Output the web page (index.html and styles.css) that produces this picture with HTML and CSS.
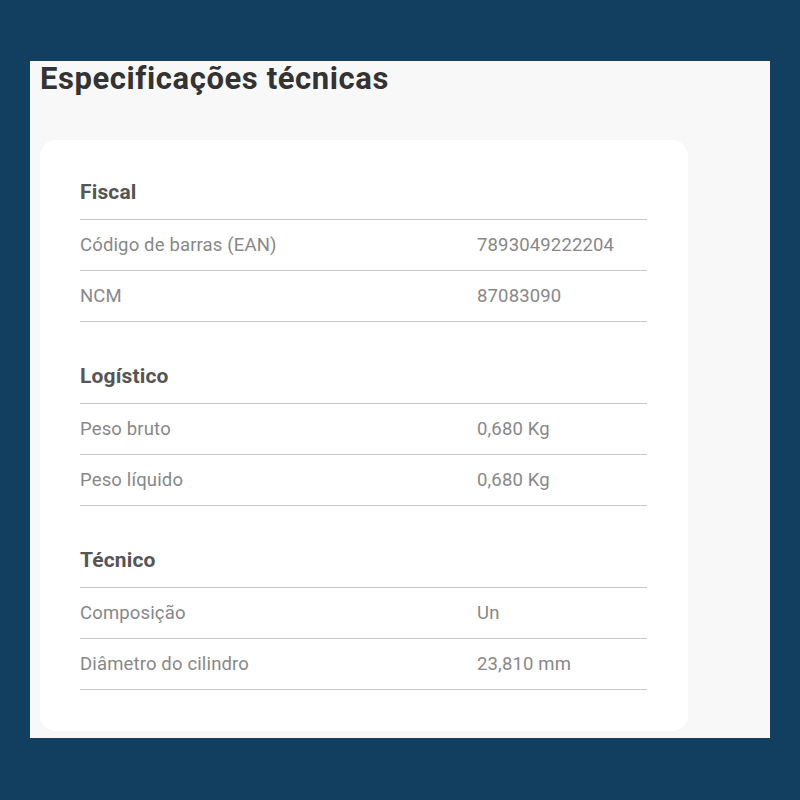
FILE: index.html
```html
<!DOCTYPE html>
<html lang="pt-BR">
<head>
<meta charset="utf-8">
<title>Especificações técnicas</title>
<link rel="stylesheet" href="styles.css">
</head>
<body>
<div class="panel">
  <h1 class="title">Especificações técnicas</h1>
  <div class="card">
    <section class="group">
      <h2 class="group-title">Fiscal</h2>
      <div class="row"><span class="label">Código de barras (EAN)</span><span class="value">7893049222204</span></div>
      <div class="row"><span class="label">NCM</span><span class="value">87083090</span></div>
    </section>
    <section class="group">
      <h2 class="group-title">Logístico</h2>
      <div class="row"><span class="label">Peso bruto</span><span class="value">0,680 Kg</span></div>
      <div class="row"><span class="label">Peso líquido</span><span class="value">0,680 Kg</span></div>
    </section>
    <section class="group">
      <h2 class="group-title">Técnico</h2>
      <div class="row"><span class="label">Composição</span><span class="value">Un</span></div>
      <div class="row"><span class="label">Diâmetro do cilindro</span><span class="value">23,810 mm</span></div>
    </section>
  </div>
</div>
</body>
</html>
```

FILE: styles.css
```css
html, body {
  margin: 0;
  padding: 0;
  background: #123f60;
  height: 100%;
}
body {
  font-family: Roboto, "Liberation Sans", sans-serif;
  padding-top: 61px;
  box-sizing: border-box;
}
.panel {
  margin-left: 30px;
  width: 740px;
  height: 677px;
  background: #f8f8f8;
  padding-left: 10px;
  box-sizing: border-box;
  overflow: hidden;
}
.title {
  margin: 0;
  font-size: 31px;
  line-height: 36px;
  letter-spacing: 0.58px;
  font-weight: 700;
  color: #333;
}
.card {
  margin-top: 43px;
  width: 648px;
  height: 591px;
  box-sizing: border-box;
  background: #fff;
  border-radius: 16px;
  padding: 28px 41px 0 40px;
}
.group + .group {
  margin-top: 30px;
}
.group-title {
  margin: 0;
  padding: 12px 0 15px;
  line-height: 24px;
  font-size: 21px;
  letter-spacing: 0.15px;
  font-weight: 700;
  color: #555;
  border-bottom: 1px solid #c8c8c8;
}
.row {
  display: flex;
  align-items: center;
  height: 50px;
  border-bottom: 1px solid #c8c8c8;
  font-size: 18.5px;
  letter-spacing: 0.15px;
  color: #888;
}
.label {
  width: 397px;
}
.value {
  flex: 1;
}
```
